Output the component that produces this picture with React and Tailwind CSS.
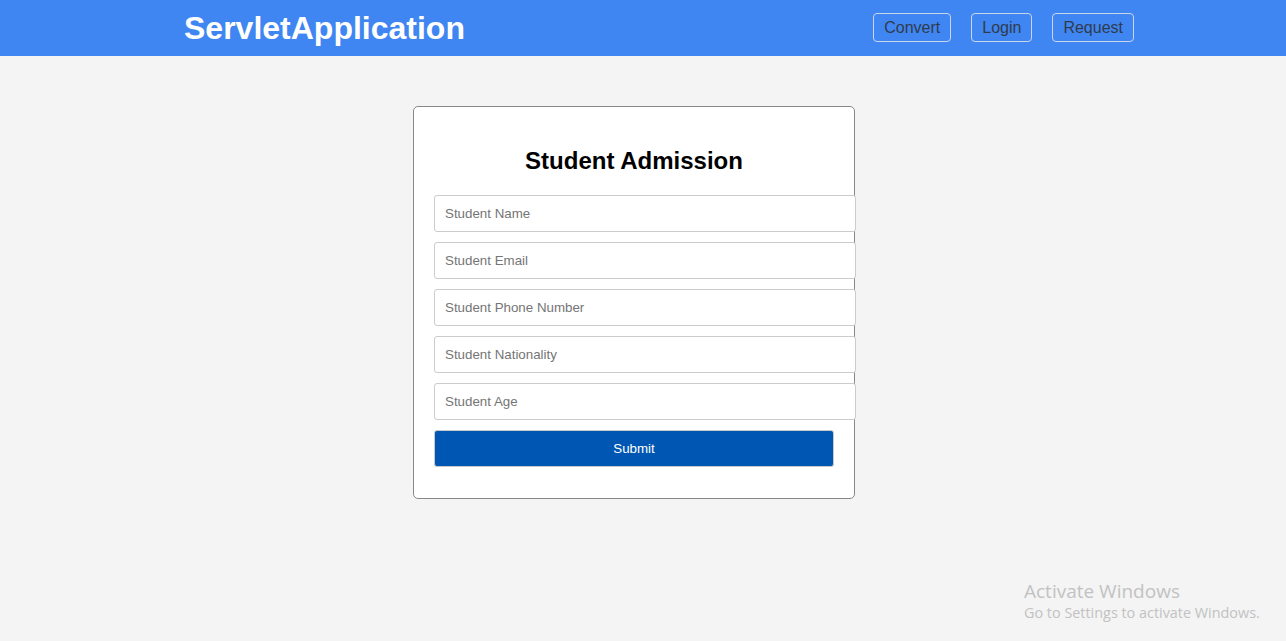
import React from 'react';

const fields = [
  'Student Name',
  'Student Email',
  'Student Phone Number',
  'Student Nationality',
  'Student Age',
];

const navLinks = ['Convert', 'Login', 'Request'];

const App = () => {
  return (
    <div className="relative min-h-[641px] bg-[#f4f4f4] font-['Liberation_Sans',Arial,sans-serif]">
      {/* barra superior */}
      <header className="h-14 bg-[#3f86f2] flex items-center justify-between pl-[184px] pr-[152px]">
        <h1 className="text-[32px] font-bold text-white leading-none -mt-[1px]">ServletApplication</h1>
        <nav className="flex items-center gap-5 -mt-[2px]">
          {navLinks.map((link) => (
            <a
              key={link}
              href="#"
              className="h-[29px] px-[10px] pt-[1px] flex items-center text-base text-[#2f3b4d] border border-[#c9d6ea] rounded-[4px]"
            >
              {link}
            </a>
          ))}
        </nav>
      </header>

      <main className="flex justify-center pt-[50px] pr-[18px]">
        <div className="w-[442px] bg-white border border-[#888] rounded-[5px] p-5">
          <h2 className="text-2xl font-bold text-black text-center leading-7 mt-5 mb-5">Student Admission</h2>
          <form className="flex flex-col">
            {fields.map((f) => (
              <input
                key={f}
                type="text"
                placeholder={f}
                className="box-content w-full h-[15px] py-[10px] px-[10px] mb-[10px] border border-[#ccc] rounded-[3px] text-[13.33px] text-[#333] placeholder:text-[#757575] bg-white"
              />
            ))}
            <button
              type="button"
              className="w-full h-[37px] bg-[#0056b3] text-white text-[13.33px] rounded-[3px] border border-[#c9c9c9] mb-[11px]"
            >
              Submit
            </button>
          </form>
        </div>
      </main>

      {/* marca de agua de Windows */}
      <div className="absolute left-[1024px] top-[579px] text-[#c2c2c2] font-['Open_Sans',sans-serif] pointer-events-none">
        <p className="text-[19px] leading-6">Activate Windows</p>
        <p className="text-[14.4px] leading-5">Go to Settings to activate Windows.</p>
      </div>
    </div>
  );
};

export default App;
